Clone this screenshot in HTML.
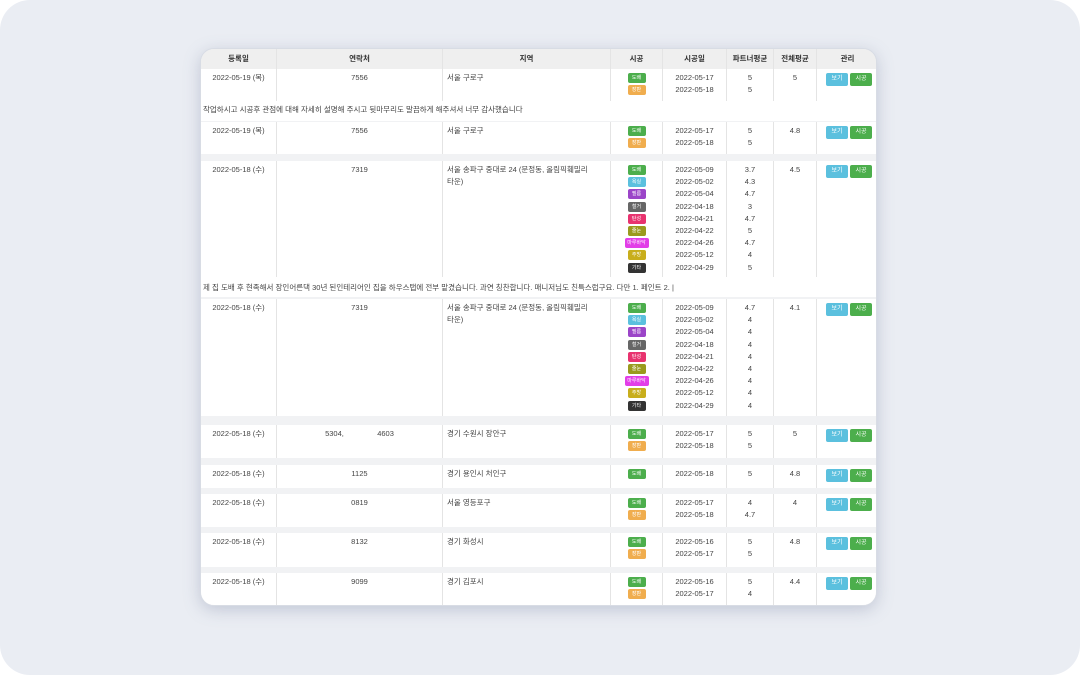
<!DOCTYPE html>
<html><head><meta charset="utf-8"><style>
*{margin:0;padding:0;box-sizing:border-box}
body{width:1080px;height:675px;background:#fff;font-family:"Liberation Sans","Noto Sans CJK KR",sans-serif;overflow:hidden;position:relative}
.bg{position:absolute;left:0;top:0;width:1080px;height:675px;background:#eaedf3;border-radius:30px}
.card{position:absolute;left:200px;top:48px;width:677px;height:558px;background:#f1f2f4;border-radius:14px;overflow:hidden;box-shadow:0 4px 16px rgba(120,130,160,.35);border:1px solid #d8dce4}
.r{position:absolute;left:0;width:677px;background:#fff}
.c{position:absolute;top:0;bottom:0;border-left:1px solid #e4e4e4;font-size:7.5px;color:#444;line-height:12.2px;padding-top:3px}
.hd{background:#efefef;height:20px;top:0}
.hd .c{font-weight:bold;text-align:center;padding-top:4px;color:#333}
.cm{font-size:7.5px;color:#444;padding:3px 0 0 2px;height:20px}
.b{display:block;margin:0 auto 2.2px;width:18px;height:10px;border-radius:2px;color:#fff;font-size:5px;line-height:10px;text-align:center}
.g{background:#4cae4c}.o{background:#f0ad4e}.cy{background:#5bc0de}.p{background:#9b45c8}.gr{background:#666}.pk{background:#e8336f}.ol{background:#9a9a1e}.mg{background:#e23ee8;width:24px}.gd{background:#c8ae1c}.bk{background:#333}
.btn{position:absolute;top:4px;height:13px;width:22px;border-radius:2px;color:#fff;font-size:6px;line-height:13px;text-align:center}
</style></head><body>
<div class="bg"></div>
<div class="card">
<div class="r hd"><div class="c" style="left:0;width:75px;border:0">등록일</div><div class="c" style="left:75px;width:166px">연락처</div><div class="c" style="left:241px;width:168px">지역</div><div class="c" style="left:409px;width:52px">시공</div><div class="c" style="left:461px;width:64px">시공일</div><div class="c" style="left:525px;width:47px">파트너평균</div><div class="c" style="left:572px;width:43px">전체평균</div><div class="c" style="left:615px;width:62px">관리</div></div>

<!-- row1 -->
<div class="r" style="top:20px;height:32px">
<div class="c" style="left:0;width:75px;border:0;text-align:center">2022-05-19 (목)</div>
<div class="c" style="left:75px;width:166px;text-align:center">7556</div>
<div class="c" style="left:241px;width:168px;padding-left:4px">서울 구로구</div>
<div class="c" style="left:409px;width:52px;padding-top:4px"><span class="b g">도배</span><span class="b o">장판</span></div>
<div class="c" style="left:461px;width:64px;text-align:center">2022-05-17<br>2022-05-18</div>
<div class="c" style="left:525px;width:47px;text-align:center">5<br>5</div>
<div class="c" style="left:572px;width:43px;text-align:center">5</div>
<div class="c" style="left:615px;width:62px"><span class="btn cy" style="left:9px">보기</span><span class="btn g" style="left:33px">시공</span></div>
</div>
<div class="r cm" style="top:52px">작업하시고 시공후 관점에 대해 자세히 설명해 주시고 뒷마무리도 말끔하게 해주셔서 너무 감사했습니다</div>

<!-- row2 -->
<div class="r" style="top:73px;height:32px">
<div class="c" style="left:0;width:75px;border:0;text-align:center">2022-05-19 (목)</div>
<div class="c" style="left:75px;width:166px;text-align:center">7556</div>
<div class="c" style="left:241px;width:168px;padding-left:4px">서울 구로구</div>
<div class="c" style="left:409px;width:52px;padding-top:4px"><span class="b g">도배</span><span class="b o">장판</span></div>
<div class="c" style="left:461px;width:64px;text-align:center">2022-05-17<br>2022-05-18</div>
<div class="c" style="left:525px;width:47px;text-align:center">5<br>5</div>
<div class="c" style="left:572px;width:43px;text-align:center">4.8</div>
<div class="c" style="left:615px;width:62px"><span class="btn cy" style="left:9px">보기</span><span class="btn g" style="left:33px">시공</span></div>
</div>

<!-- row3 -->
<div class="r" style="top:112px;height:116px">
<div class="c" style="left:0;width:75px;border:0;text-align:center">2022-05-18 (수)</div>
<div class="c" style="left:75px;width:166px;text-align:center">7319</div>
<div class="c" style="left:241px;width:168px;padding-left:4px">서울 송파구 중대로 24 (문정동, 올림픽훼밀리<br>타운)</div>
<div class="c" style="left:409px;width:52px;padding-top:4px"><span class="b g">도배</span><span class="b cy">욕실</span><span class="b p">필름</span><span class="b gr">철거</span><span class="b pk">탄성</span><span class="b ol">줄눈</span><span class="b mg">마루바닥</span><span class="b gd">주방</span><span class="b bk">기타</span></div>
<div class="c" style="left:461px;width:64px;text-align:center">2022-05-09<br>2022-05-02<br>2022-05-04<br>2022-04-18<br>2022-04-21<br>2022-04-22<br>2022-04-26<br>2022-05-12<br>2022-04-29</div>
<div class="c" style="left:525px;width:47px;text-align:center">3.7<br>4.3<br>4.7<br>3<br>4.7<br>5<br>4.7<br>4<br>5</div>
<div class="c" style="left:572px;width:43px;text-align:center">4.5</div>
<div class="c" style="left:615px;width:62px"><span class="btn cy" style="left:9px">보기</span><span class="btn g" style="left:33px">시공</span></div>
</div>
<div class="r cm" style="top:228px;padding-top:5px">제 집 도배 후 현족해서 장인어른댁 30년 된인테리어인 집을 하우스탭에 전부 맡겼습니다. 과연 칭찬합니다. 매니저님도 친특스럽구요. 다만 1. 페인트 2. |</div>

<!-- row4 -->
<div class="r" style="top:250px;height:117px">
<div class="c" style="left:0;width:75px;border:0;text-align:center">2022-05-18 (수)</div>
<div class="c" style="left:75px;width:166px;text-align:center">7319</div>
<div class="c" style="left:241px;width:168px;padding-left:4px">서울 송파구 중대로 24 (문정동, 올림픽훼밀리<br>타운)</div>
<div class="c" style="left:409px;width:52px;padding-top:4px"><span class="b g">도배</span><span class="b cy">욕실</span><span class="b p">필름</span><span class="b gr">철거</span><span class="b pk">탄성</span><span class="b ol">줄눈</span><span class="b mg">마루바닥</span><span class="b gd">주방</span><span class="b bk">기타</span></div>
<div class="c" style="left:461px;width:64px;text-align:center">2022-05-09<br>2022-05-02<br>2022-05-04<br>2022-04-18<br>2022-04-21<br>2022-04-22<br>2022-04-26<br>2022-05-12<br>2022-04-29</div>
<div class="c" style="left:525px;width:47px;text-align:center">4.7<br>4<br>4<br>4<br>4<br>4<br>4<br>4<br>4</div>
<div class="c" style="left:572px;width:43px;text-align:center">4.1</div>
<div class="c" style="left:615px;width:62px"><span class="btn cy" style="left:9px">보기</span><span class="btn g" style="left:33px">시공</span></div>
</div>

<!-- row5 -->
<div class="r" style="top:376px;height:33px">
<div class="c" style="left:0;width:75px;border:0;text-align:center">2022-05-18 (수)</div>
<div class="c" style="left:75px;width:166px;text-align:center">5304,&nbsp;&nbsp;&nbsp;&nbsp;&nbsp;&nbsp;&nbsp;&nbsp;&nbsp;&nbsp;&nbsp;&nbsp;&nbsp;&nbsp;&nbsp;&nbsp;4603</div>
<div class="c" style="left:241px;width:168px;padding-left:4px">경기 수원시 장안구</div>
<div class="c" style="left:409px;width:52px;padding-top:4px"><span class="b g">도배</span><span class="b o">장판</span></div>
<div class="c" style="left:461px;width:64px;text-align:center">2022-05-17<br>2022-05-18</div>
<div class="c" style="left:525px;width:47px;text-align:center">5<br>5</div>
<div class="c" style="left:572px;width:43px;text-align:center">5</div>
<div class="c" style="left:615px;width:62px"><span class="btn cy" style="left:9px">보기</span><span class="btn g" style="left:33px">시공</span></div>
</div>

<!-- row6 -->
<div class="r" style="top:416px;height:23px">
<div class="c" style="left:0;width:75px;border:0;text-align:center">2022-05-18 (수)</div>
<div class="c" style="left:75px;width:166px;text-align:center">1125</div>
<div class="c" style="left:241px;width:168px;padding-left:4px">경기 용인시 처인구</div>
<div class="c" style="left:409px;width:52px;padding-top:4px"><span class="b g">도배</span></div>
<div class="c" style="left:461px;width:64px;text-align:center">2022-05-18</div>
<div class="c" style="left:525px;width:47px;text-align:center">5</div>
<div class="c" style="left:572px;width:43px;text-align:center">4.8</div>
<div class="c" style="left:615px;width:62px"><span class="btn cy" style="left:9px">보기</span><span class="btn g" style="left:33px">시공</span></div>
</div>

<!-- row7 -->
<div class="r" style="top:445px;height:33px">
<div class="c" style="left:0;width:75px;border:0;text-align:center">2022-05-18 (수)</div>
<div class="c" style="left:75px;width:166px;text-align:center">0819</div>
<div class="c" style="left:241px;width:168px;padding-left:4px">서울 영등포구</div>
<div class="c" style="left:409px;width:52px;padding-top:4px"><span class="b g">도배</span><span class="b o">장판</span></div>
<div class="c" style="left:461px;width:64px;text-align:center">2022-05-17<br>2022-05-18</div>
<div class="c" style="left:525px;width:47px;text-align:center">4<br>4.7</div>
<div class="c" style="left:572px;width:43px;text-align:center">4</div>
<div class="c" style="left:615px;width:62px"><span class="btn cy" style="left:9px">보기</span><span class="btn g" style="left:33px">시공</span></div>
</div>

<!-- row8 -->
<div class="r" style="top:484px;height:34px">
<div class="c" style="left:0;width:75px;border:0;text-align:center">2022-05-18 (수)</div>
<div class="c" style="left:75px;width:166px;text-align:center">8132</div>
<div class="c" style="left:241px;width:168px;padding-left:4px">경기 화성시</div>
<div class="c" style="left:409px;width:52px;padding-top:4px"><span class="b g">도배</span><span class="b o">장판</span></div>
<div class="c" style="left:461px;width:64px;text-align:center">2022-05-16<br>2022-05-17</div>
<div class="c" style="left:525px;width:47px;text-align:center">5<br>5</div>
<div class="c" style="left:572px;width:43px;text-align:center">4.8</div>
<div class="c" style="left:615px;width:62px"><span class="btn cy" style="left:9px">보기</span><span class="btn g" style="left:33px">시공</span></div>
</div>

<!-- row9 -->
<div class="r" style="top:524px;height:34px">
<div class="c" style="left:0;width:75px;border:0;text-align:center">2022-05-18 (수)</div>
<div class="c" style="left:75px;width:166px;text-align:center">9099</div>
<div class="c" style="left:241px;width:168px;padding-left:4px">경기 김포시</div>
<div class="c" style="left:409px;width:52px;padding-top:4px"><span class="b g">도배</span><span class="b o">장판</span></div>
<div class="c" style="left:461px;width:64px;text-align:center">2022-05-16<br>2022-05-17</div>
<div class="c" style="left:525px;width:47px;text-align:center">5<br>4</div>
<div class="c" style="left:572px;width:43px;text-align:center">4.4</div>
<div class="c" style="left:615px;width:62px"><span class="btn cy" style="left:9px">보기</span><span class="btn g" style="left:33px">시공</span></div>
</div>
</div>
</body></html>
